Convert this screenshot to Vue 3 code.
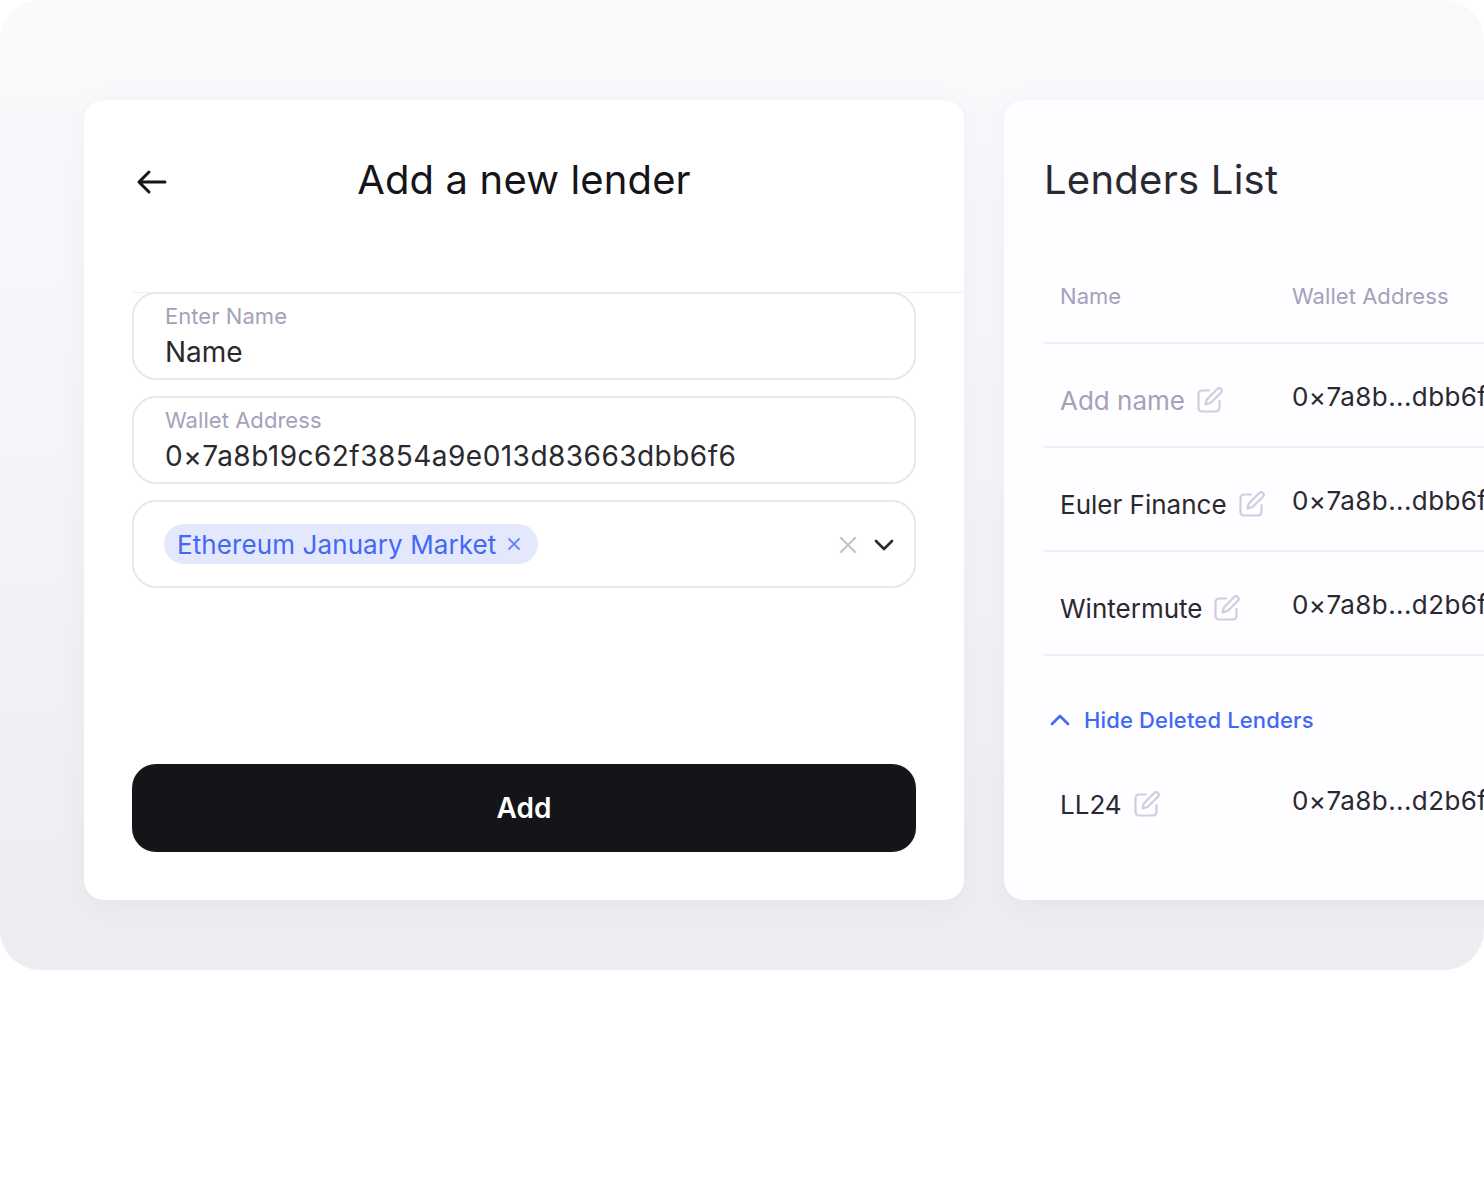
<script setup>
const lenders = [
  { name: 'Add name', wallet: '0×7a8b...dbb6f6', empty: true },
  { name: 'Euler Finance', wallet: '0×7a8b...dbb6f6' },
  { name: 'Wintermute', wallet: '0×7a8b...d2b6f6' }
]
</script>

<template>
  <div class="page">
    <div class="shell">
      <section class="card add-card">
        <header class="add-head">
          <svg class="back" width="32" height="32" viewBox="0 0 32 32" fill="none">
            <path d="M29 17H3M13 7 3 17l10 10" stroke="#151418" stroke-width="3" stroke-linecap="round" stroke-linejoin="round" />
          </svg>
          <h1>Add a new lender</h1>
        </header>

        <div class="field">
          <label>Enter Name</label>
          <div class="value">Name</div>
        </div>
        <div class="field">
          <label>Wallet Address</label>
          <div class="value address">0×7a8b19c62f3854a9e013d83663dbb6f6</div>
        </div>
        <div class="field select">
          <span class="chip">
            Ethereum January Market
            <svg width="14" height="14" viewBox="0 0 14 14" fill="none">
              <path d="M2 2l10 10M12 2 2 12" stroke="#6d85f4" stroke-width="1.8" stroke-linecap="round" />
            </svg>
          </span>
          <svg class="clear" width="18" height="18" viewBox="0 0 18 18" fill="none">
            <path d="M2 2l14 14M16 2 2 16" stroke="#c6c3d6" stroke-width="2.4" stroke-linecap="round" />
          </svg>
          <svg class="caret" width="20" height="12" viewBox="0 0 20 12" fill="none">
            <path d="M2 2l8 8 8-8" stroke="#2a2930" stroke-width="2.6" stroke-linecap="round" stroke-linejoin="round" />
          </svg>
        </div>

        <button class="add-btn">Add</button>
      </section>

      <section class="card list-card">
        <h2>Lenders List</h2>
        <div class="row head">
          <span class="col-name">Name</span>
          <span>Wallet Address</span>
        </div>
        <div v-for="l in lenders" :key="l.name" class="row">
          <span class="col-name" :class="{ empty: l.empty }">
            {{ l.name }}
            <svg class="edit" width="26" height="26" viewBox="0 0 26 26" fill="none">
              <path d="M12 3.500H5A3.500 3.500 0 0 0 1.500 7v14A3.500 3.500 0 0 0 5 24.500h14a3.500 3.500 0 0 0 3.500-3.500v-7" stroke="#d0cde0" stroke-width="2.200" stroke-linecap="round" />
              <path d="M20.200 2a2.600 2.600 0 0 1 3.700 3.700L13.500 16l-5 1.400 1.400-5z" stroke="#d0cde0" stroke-width="2.200" stroke-linejoin="round" />
            </svg>
          </span>
          <span class="wallet">{{ l.wallet }}</span>
        </div>

        <div class="toggle">
          <svg width="20" height="12" viewBox="0 0 20 12" fill="none">
            <path d="M2 10l8-8 8 8" stroke="#4169f6" stroke-width="2.600" stroke-linecap="round" stroke-linejoin="round" />
          </svg>
          Hide Deleted Lenders
        </div>

        <div class="row deleted">
          <span class="col-name">
            LL24
            <svg class="edit" width="26" height="26" viewBox="0 0 26 26" fill="none">
              <path d="M12 3.500H5A3.500 3.500 0 0 0 1.500 7v14A3.500 3.500 0 0 0 5 24.500h14a3.500 3.500 0 0 0 3.500-3.500v-7" stroke="#d0cde0" stroke-width="2.200" stroke-linecap="round" />
              <path d="M20.200 2a2.600 2.600 0 0 1 3.700 3.700L13.500 16l-5 1.400 1.400-5z" stroke="#d0cde0" stroke-width="2.200" stroke-linejoin="round" />
            </svg>
          </span>
          <span class="wallet">0×7a8b...d2b6f6</span>
        </div>
      </section>
    </div>
  </div>
</template>

<style>
html, body {
  background: #fff;
}
</style>

<style scoped>
.page {
  width: 1484px;
  height: 1182px;
  overflow: hidden;
  font-family: Inter, "Liberation Sans", sans-serif;
  color: #2a2930;
}
.shell {
  height: 970px;
  box-sizing: border-box;
  padding: 100px 0 0 84px;
  display: flex;
  gap: 40px;
  border-radius: 40px;
  overflow: hidden;
  background: linear-gradient(180deg, #fbf9fc 0%, #f7f5f9 40%, #edecf1 100%);
}
.card {
  height: 800px;
  flex: none;
  box-sizing: border-box;
  background: #fff;
  border-radius: 20px;
  box-shadow: 0 6px 30px rgba(60, 50, 90, 0.05);
}
.add-card {
  width: 880px;
  padding: 0 48px 48px;
  display: flex;
  flex-direction: column;
}
.add-head {
  position: relative;
  height: 193px;
  margin-right: -48px;
  box-sizing: border-box;
  border-bottom: 1px solid #eeedf3;
  padding-right: 48px;
  margin-bottom: -1px;
}
.back {
  position: absolute;
  left: 4px;
  top: 65px;
}
h1 {
  margin: 0;
  padding-top: 56px;
  font-size: 40px;
  line-height: 48px;
  font-weight: 400;
  letter-spacing: 0.15px;
  color: #151418;
  text-align: center;
}
.field {
  position: relative;
  height: 88px;
  box-sizing: border-box;
  margin-bottom: 16px;
  padding: 10px 31px 0;
  background: #fff;
  border: 2px solid #e8e7ee;
  border-radius: 24px;
}
.field label {
  display: block;
  font-size: 22px;
  line-height: 24px;
  letter-spacing: 0.05px;
  color: #a5a1ba;
}
.value {
  margin-top: 6px;
  font-size: 28px;
  line-height: 36px;
  color: #2a2930;
}
.address {
  letter-spacing: 0.47px;
}
.select {
  display: flex;
  align-items: center;
  padding: 1px 20px 0 30px;
}
.chip {
  display: inline-flex;
  align-items: center;
  gap: 11px;
  height: 40px;
  margin-top: -1px;
  padding: 0 17px 0 13px;
  border-radius: 20px;
  background: #e3e8fd;
  color: #4169f6;
  font-size: 26px;
  letter-spacing: 0.1px;
}
.clear {
  margin-left: auto;
}
.caret {
  margin-left: 17px;
}
.add-btn {
  margin-top: auto;
  height: 88px;
  flex: none;
  border: 0;
  border-radius: 24px;
  background: #151418;
  color: #fff;
  font-family: inherit;
  font-size: 28px;
  font-weight: 600;
}
.list-card {
  width: 700px;
  padding-left: 40px;
  background: #fefdff;
}
h2 {
  margin: 0;
  padding-top: 56px;
  height: 144px;
  box-sizing: border-box;
  font-size: 40px;
  line-height: 48px;
  font-weight: 400;
  letter-spacing: 0.25px;
  color: #2a2930;
}
.row {
  display: flex;
  align-items: center;
  height: 104px;
  padding: 10px 0 0 16px;
  border-bottom: 2px solid #f0eff5;
  box-sizing: border-box;
  font-size: 26px;
  color: #2a2930;
  white-space: nowrap;
}
.row.head {
  height: 100px;
  font-size: 22px;
  letter-spacing: 0.05px;
  color: #a5a1ba;
  padding: 6px 0 0 16px;
}
.col-name {
  width: 232px;
  flex: none;
  display: flex;
  align-items: center;
  gap: 12px;
}
.col-name.empty {
  color: #a5a1ba;
}
.wallet {
  margin-top: -8px;
  letter-spacing: 0.4px;
}
.toggle {
  display: flex;
  align-items: center;
  gap: 14px;
  height: 26px;
  margin-top: 51px;
  padding-left: 6px;
  color: #4169f6;
  font-size: 22px;
  font-weight: 500;
  letter-spacing: 0.15px;
}
.row.deleted {
  border-bottom: 0;
  height: 56px;
  margin-top: 38px;
}
</style>
